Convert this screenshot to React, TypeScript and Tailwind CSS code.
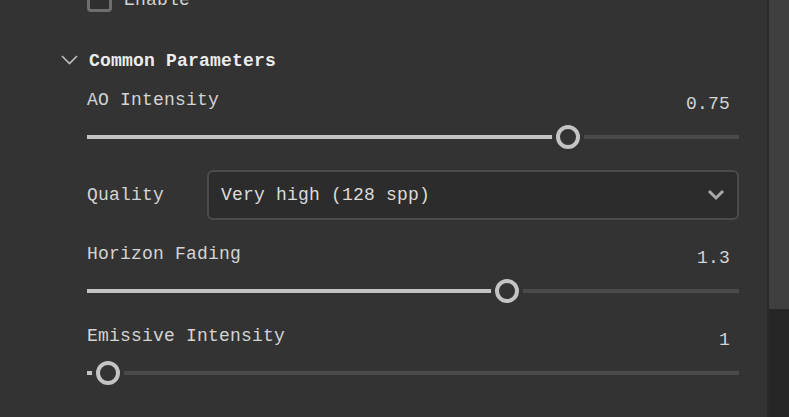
import React from 'react';

const font = { fontFamily: '"Liberation Mono", "DejaVu Sans Mono", monospace' };

function Slider({ percent }: { percent: number }) {
  return (
    <div className="relative h-6 w-full flex items-center">
      <div className="h-[4px] w-full bg-[#4a4a4a]" />
      <div className="absolute left-0 h-[4px] bg-[#c4c4c4]" style={{ width: `${percent}%` }} />
      <div
        className="absolute top-1/2 h-[32px] w-[32px] -translate-x-1/2 -translate-y-1/2 rounded-full bg-[#333333] flex items-center justify-center"
        style={{ left: `${percent}%` }}
      >
        <div className="h-[24px] w-[24px] rounded-full border-[4px] border-[#c4c4c4] bg-[#333333]" />
      </div>
    </div>
  );
}

function SliderField({ label, value, percent }: { label: string; value: string; percent: number }) {
  return (
    <div className="flex flex-col">
      <div className="flex h-6 items-center justify-between pr-[9px]">
        <span className="translate-y-[1px] text-[#d4d4d4]">{label}</span>
        <span className="translate-y-[5px] text-[#d4d4d4]">{value}</span>
      </div>
      <div className="mt-[14px]">
        <Slider percent={percent} />
      </div>
    </div>
  );
}

export default function App() {
  return (
    <div className="flex h-[417px] w-[789px] overflow-hidden bg-[#333333] text-[18px] tracking-[0.2px]" style={font}>
      <div className="flex-1 pl-[87px] pr-[28px]">
        <div className="-mt-[12px] flex h-6 items-center gap-[12px]">
          <div className="h-[24px] w-[25px] rounded-[4px] border-[3px] border-[#6e6e6e] bg-[#2f2f2f]" />
          <span className="text-[#d4d4d4]">Enable</span>
        </div>

        <div className="-ml-[26px] mt-[36px] flex h-6 items-center gap-[11px]">
          <svg width="17" height="10" viewBox="0 0 17 10" fill="none">
            <path d="M1 1 L8.5 8.5 L16 1" stroke="#bdbdbd" strokeWidth="1.6" />
          </svg>
          <span className="translate-y-[1px] font-bold text-[#ececec]">Common Parameters</span>
        </div>

        <div className="mt-[15px]">
          <SliderField label="AO Intensity" value="0.75" percent={73.8} />
        </div>

        <div className="mt-[21px] flex items-center">
          <span className="w-[120px] text-[#d4d4d4]">Quality</span>
          <div className="flex h-[50px] flex-1 items-center justify-between rounded-[6px] border-2 border-[#4b4b4b] bg-[#2c2c2c] pl-[12px] pr-[12px]">
            <span className="text-[#dcdcdc]">Very high (128 spp)</span>
            <svg width="18" height="12" viewBox="0 0 18 12" fill="none">
              <path d="M2 2 L9 9 L16 2" stroke="#a8a8a8" strokeWidth="3" />
            </svg>
          </div>
        </div>

        <div className="mt-[21px]">
          <SliderField label="Horizon Fading" value="1.3" percent={64.4} />
        </div>

        <div className="mt-[20px]">
          <SliderField label="Emissive Intensity" value="1" percent={3.2} />
        </div>
      </div>

      <div className="flex w-[22px] flex-col border-l-2 border-[#2a2a2a]">
        <div className="h-[309px] bg-[#3f3f3f]" />
        <div className="flex-1 bg-[#262626]" />
      </div>
    </div>
  );
}
